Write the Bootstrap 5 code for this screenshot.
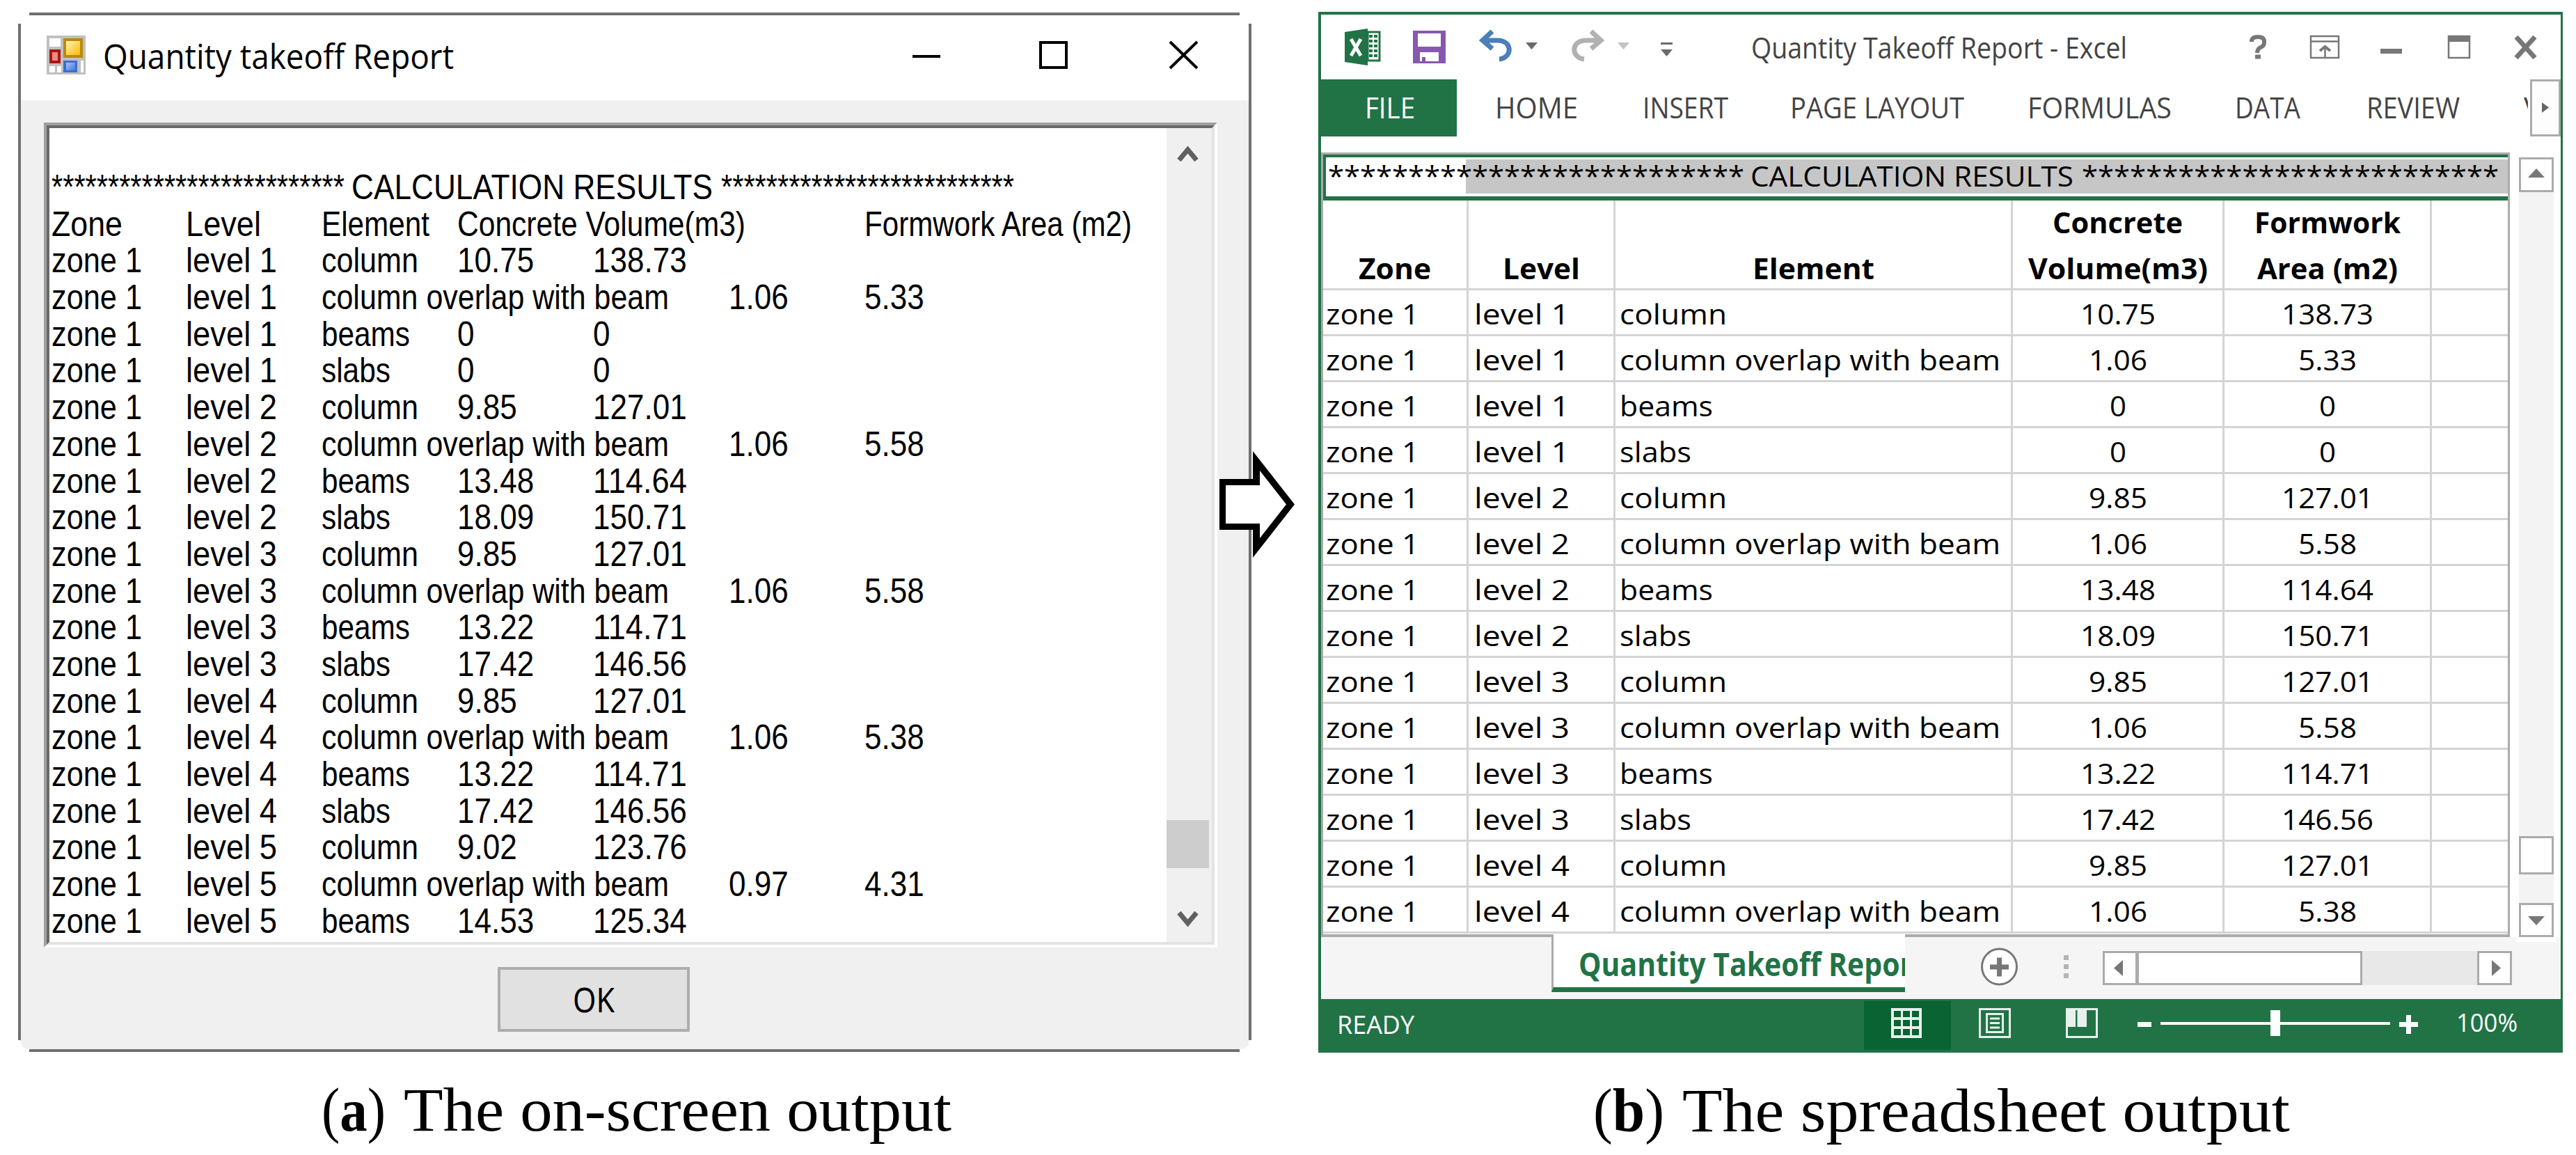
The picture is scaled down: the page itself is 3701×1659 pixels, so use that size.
<!DOCTYPE html>
<html lang="en">
<head>
<meta charset="utf-8">
<title>Quantity takeoff report</title>
<link rel="stylesheet" href="https://cdn.jsdelivr.net/npm/bootstrap@5.3.0/dist/css/bootstrap.min.css">
<style>
body{width:3701px;height:1659px;overflow:hidden;background:#fff;color:#000}
svg{display:block;flex:none}
.fit{display:inline-block;white-space:pre;transform-origin:0 50%;flex:none}
.figure-row{padding:18px 19px 0 26px;gap:96px}
.cap{font:88px/100px "Liberation Serif",serif;margin-top:34px;gap:26px}
/* dialog */
.dlg{width:1772px;height:1493px;padding:4px;
 background:linear-gradient(#707070,#707070) 16px 0/1739px 4px no-repeat,
 linear-gradient(#707070,#707070) 16px 1489px/1739px 4px no-repeat,
 linear-gradient(#707070,#707070) 0 16px/4px 1460px no-repeat,
 linear-gradient(#707070,#707070) 1768px 16px/4px 1460px no-repeat}
.dlg-title{height:122px;padding-left:37px;font:49px/116px "Open Sans",sans-serif}
.dlg-body{height:1363px;background:#f0f0f0;padding:32px 45px 0 33px;border-radius:0 0 10px 10px}
.sunken{height:1185px;border:4px solid;border-color:#a0a0a0 #fff #fff #a0a0a0}
.sunken-in{height:1177px;border:4px solid;border-color:#696969 #e3e3e3 #e3e3e3 #696969;background:#fff}
.report{padding:59px 0 0 3px;font:50px/52.7px "Liberation Sans",sans-serif;height:1169px}
.report .line{height:52.7px}
.tabstop{width:195px;flex:none;white-space:nowrap}
.tabstop:first-child{width:193px}
.vbar{width:65px;background:#f0f0f0}
.okbtn{width:276px;height:93px;border:4px solid #adadad;background:#e1e1e1;border-radius:0;margin:28px 0 0 652px;padding:0;font:50px/79px "Noto Sans",sans-serif;color:#000;display:block}
/* spreadsheet */
.xl{width:1788px;height:1495px;margin-top:-1px;border:4px solid #217346;border-right-width:3px;border-bottom:0;font-family:"Open Sans",sans-serif;background:#fff}
.xl-title{height:93px;font-size:42px;line-height:93px;color:#444}
.ribbon{height:82px;font-size:42px;line-height:80px;color:#444}
.filetab{width:195px;height:82px;padding-left:63px;background:#217346;color:#fff}
.ribbtn{border:3px solid #ababab;width:44px;height:82px;background:#fdfdfd}
.sheetwrap{margin-top:23px;height:1127px}
.sheet{width:1708px;height:1127px;border:3px solid #ababab;border-bottom-width:4px;font:40.5px/68px "Open Sans",sans-serif}
.selrow{height:66px;border:solid #217346;border-width:4px 0 6px 4px;padding:3px 0 4px;line-height:66px}
.selfill{height:49px;background:linear-gradient(#c6c6c6,#c6c6c6) 201px 0/100% 100% no-repeat;line-height:48px;padding-left:3px}
.r{height:66px;border-bottom:3px solid #d4d4d4}
.r.hd{height:129px;font-weight:700;line-height:66px;align-items:stretch}
.r>div{border-right:3px solid #d4d4d4;flex:none;padding-left:4px;white-space:nowrap}
.r>div:nth-child(1){width:209px}.r>div:nth-child(2){width:211px;padding-left:8px}
.r>div:nth-child(3){width:571px;padding-left:6px}.r>div:nth-child(4){width:304px}
.r>div:nth-child(5){width:298px}.r>div:nth-child(6){border:0}
.r>div.text-center{padding-left:0}
.hd>div{display:flex;flex-direction:column;justify-content:flex-end;align-items:center;padding:0!important}
.hd>div::after{content:"";margin-bottom:-5px}
.strip{height:93px;margin-top:-4px;position:relative;background:linear-gradient(transparent 4px,#f5f5f5 4px)}
.stab{margin-left:331px;width:508px;height:83px;background:#fff;border-left:3px solid #ababab;border-bottom:7px solid #217346;color:#217346;font-size:46px;font-weight:700;line-height:85px;padding-left:36px;overflow:hidden}
.status{height:77px;background:#217346;color:#fff;font-size:37px;line-height:71px;padding-left:23px}
.arrow{position:absolute;left:1752px;top:648px}
</style>
</head>
<body>
<main class="d-flex figure-row">
 <section>
  <div class="dlg">
   <div class="dlg-title d-flex">
    <svg width="56" height="56" viewBox="0 0 56 56" style="margin-top:29px"><defs><linearGradient id="y" x2="1" y2="1"><stop stop-color="#fff3b8"/><stop offset="1" stop-color="#fdb900"/></linearGradient><linearGradient id="b" x2="1" y2="1"><stop stop-color="#a9c8ff"/><stop offset="1" stop-color="#3f74dd"/></linearGradient></defs><path fill="#c0c0c0" d="M0 0h56v56H0z"/><path fill="#fff" d="M4 4h16v12H4zM4 44h8v9H4zM15 44h6v9h-6zM49 36h4v17h-4z"/><path fill="#b98a0e" d="M24 4h28v28H24z"/><path fill="url(#y)" d="M28 8h20v20H28z"/><path fill="#ab1710" d="M4 20h16v20H4z"/><path fill="#eb8b80" d="M8 24h8v12H8z"/><path fill="#3a6fcc" d="M24 36h20v17H24z"/><path fill="url(#b)" d="M28 39h13v11H28z"/></svg>
    <span class="fit" data-w="504" style="margin-left:25px">Quantity takeoff Report</span>
    <svg class="ms-auto" width="500" height="122" viewBox="1294 22 500 122" fill="none" stroke="#000" stroke-width="4"><path d="M1311 81h40M1495 61h37v36h-37zM1681 60l39 38M1720 60l-39 38"/></svg>
   </div>
   <div class="dlg-body">
    <div class="sunken"><div class="sunken-in d-flex">
     <div class="report flex-grow-1" id="report"></div>
     <svg class="vbar" width="65" height="1169" viewBox="1676 184 65 1169"><path fill="#cdcdcd" d="M1676 1178h61v69h-61z"/><path fill="none" stroke="#606060" stroke-width="7" d="M1694 230l12.500-15 12.500 15M1694 1311l12.500 15 12.500-15"/></svg>
    </div></div>
    <button class="okbtn btn"><span class="fit" data-w="60">OK</span></button>
   </div>
  </div>
  <div class="cap d-flex" style="padding-left:436px"><span class="fit" data-w="92">(<b>a</b>)</span><span class="fit" data-w="787">The on-screen output</span></div>
 </section>
 <section>
  <div class="xl">
   <div class="xl-title d-flex">
    <svg width="618" height="93" viewBox="1898 21 618 93">
     <path fill="#217346" d="M1932 46l33-5v53l-33-5z"/><path fill="#fff" stroke="#217346" stroke-width="3" d="M1965 46h17v41h-17z"/><path stroke="#217346" stroke-width="4" d="M1967 52h12M1967 59h12M1967 66h12M1967 73h12M1967 80h12" stroke-dasharray="5 2"/><path stroke="#fff" stroke-width="5" d="M1941 56l14 24M1955 56l-14 24"/>
     <path fill="#8858ae" d="M2030 44h47v47h-47z"/><path fill="#fff" d="M2037 48h33v19h-33zM2040 75h27v13h-19v-6h-5v6h-3z"/>
     <path fill="none" stroke="#4a7fb8" stroke-width="7" d="M2130 58h21c23 0 22 25 3 27M2144 45l-14 13 14 12"/><path fill="none" stroke="#b1b1b1" stroke-width="7" d="M2300 58h-21c-23 0-22 25-3 27M2286 45l14 13-14 12"/>
     <path fill="#6a6a6a" d="M2192 61h17l-8.500 10zM2386 61h17v3h-17zM2386 71h17l-8.500 10z"/><path fill="#c3c3c3" d="M2324 61h17l-8.500 10z"/></svg>
    <span class="fit" data-w="540">Quantity Takeoff Report - Excel</span>
    <svg class="ms-auto" width="460" height="93" viewBox="3219 21 460 93" fill="none" stroke="#777"><path stroke-width="6" d="M3235 60v-2q1-5 9-5t9 5v3q0 5-5 7t-5 8M3240 81.500h8"/><path stroke-width="2.500" d="M3320 52h40v31h-40zM3320 59.500h40M3340.500 82V66"/><path stroke-width="4" d="M3333 73l7.500-6 7.500 6"/><path stroke-width="7" d="M3420 73.500h31"/><path stroke-width="2.500" d="M3518 52h30v31h-30z"/><path stroke-width="9" d="M3517 55.500h32"/><path stroke-width="7" d="M3615 53l27 30M3642 53l-27 30"/></svg>
   </div>
   <div class="ribbon d-flex">
    <div class="filetab"><span class="fit" data-w="72">FILE</span></div>
    <span class="fit" data-w="119" style="margin-left:55px">HOME</span>
    <span class="fit" data-w="123" style="margin-left:93px">INSERT</span>
    <span class="fit" data-w="250" style="margin-left:89px">PAGE LAYOUT</span>
    <span class="fit" data-w="207" style="margin-left:91px">FORMULAS</span>
    <span class="fit" data-w="94" style="margin-left:91px">DATA</span>
    <span class="fit" data-w="134" style="margin-left:95px">REVIEW</span>
    <span class="overflow-hidden" style="width:6px;margin-left:92px">V</span>
    <div class="ribbtn ms-auto"><svg width="38" height="76" viewBox="3638 117 38 76"><path fill="#666" d="M3652 147l10 7.500-10 7.500z"/></svg></div>
   </div>
   <div class="sheetwrap d-flex">
    <div class="sheet">
     <div class="selrow"><div class="selfill d-flex"><span class="fit" data-w="598">**************************</span><span class="fit" data-w="464" style="margin-left:9px">CALCULATION RESULTS</span><span class="fit" data-w="599" style="margin-left:12px">**************************</span></div></div>
     <div class="r hd d-flex"><div><span class="fit" data-w="104">Zone</span></div><div><span class="fit" data-w="111">Level</span></div><div><span class="fit" data-w="175">Element</span></div><div><span class="fit" data-w="187">Concrete</span><span class="fit" data-w="258">Volume(m3)</span></div><div><span class="fit" data-w="210">Formwork</span><span class="fit" data-w="202">Area (m2)</span></div><div></div></div>
     <div id="rows"></div>
    </div>
    <svg width="73" height="1134" viewBox="3606 219 73 1134" style="z-index:1"><path fill="#f3f3f3" d="M3619 226h50v1120h-50z"/><path fill="#fff" d="M3616 1340h56v13h-56z"/><g fill="#fff" stroke="#ababab" stroke-width="3"><path d="M3620.500 227.500h47v47h-47zM3620.500 1202.500h47v52h-47zM3620.500 1298.500h47v46h-47z"/></g><path fill="#777" d="M3632 255l12-13 12 13zM3632 1316l12 13 12-13z"/></svg>
   </div>
   <div class="strip d-flex">
    <svg width="0" height="93" viewBox="1898 1342 1 93" overflow="visible"><path fill="#c0c0c0" d="M2001 1375v24l-14-12zM2083 1375v24l14-12z"/></svg>
    <div class="stab"><span class="fit" data-w="498">Quantity Takeoff Report</span></div>
    <svg width="942" height="93" viewBox="2737 1342 942 93"><ellipse cx="2872.500" cy="1388.500" rx="25" ry="25.500" fill="#fff" stroke="#777" stroke-width="3"/><path stroke="#777" stroke-width="7" d="M2859 1389h27M2872.500 1375.500v27"/><path fill="#b5b5b5" d="M2965 1372h7v7h-7zM2965 1385h7v7h-7zM2965 1398h7v7h-7z"/><path fill="#e8e8e8" d="M3390 1366h170v49h-170z"/><g fill="#fff" stroke="#ababab" stroke-width="3"><path d="M3022.500 1367.500h47v46h-47zM3071.500 1367.500h321v46h-321zM3560.500 1367.500h47v46h-47z"/></g><path fill="#777" d="M3050 1379v23l-13-11.500zM3580 1379v23l13-11.500z"/></svg>
   </div>
   <div class="status d-flex">
    <span class="fit" data-w="111">READY</span>
    <svg class="ms-auto" width="851" height="77" viewBox="2678 1435 851 77"><path fill="#0a6332" d="M2678 1438h125v70h-125z"/><path fill="#e8f1ec" d="M2717 1448h44v43h-44z"/><path fill="#0a6332" d="M2721 1452h10v9h-10zM2734 1452h10v9h-10zM2747 1452h10v9h-10zM2721 1465h10v9h-10zM2734 1465h10v9h-10zM2747 1465h10v9h-10zM2721 1478h10v9h-10zM2734 1478h10v9h-10zM2747 1478h10v9h-10z"/><g fill="none" stroke="#e8f1ec" stroke-width="3"><path d="M2844.500 1449.500h43v40h-43zM2854.500 1456.500h23v26h-23zM2859 1463h14M2859 1469.500h14M2859 1476h14M2969.500 1449.500h43v40h-43z"/></g><path fill="#e8f1ec" d="M2970 1450h12v25h-12zM2984.500 1450h13.500v25h-13.500z"/><path fill="#fff" d="M3071 1468h20v7h-20zM3104 1468h330v4h-330zM3262 1451h14v37h-14zM3447 1468h27v7h-27zM3457 1458h7v27h-7z"/></svg>
    <span class="fit" data-w="88" style="line-height:65px">100%</span><span style="width:62px"></span>
   </div>
  </div>
  <div class="cap d-flex" style="padding-left:395px"><span class="fit" data-w="102">(<b>b</b>)</span><span class="fit" data-w="873">The spreadsheet output</span></div>
 </section>
</main>
<svg class="arrow" width="108" height="153" viewBox="1752 648 108 153"><path d="M1752 688h48v-40l60 76.500-60 76.500v-40h-48z"/><path fill="#fff" d="M1761 697h49v-21l38 48.500-38 48.500v-21h-49z"/></svg>
<script src="https://cdn.jsdelivr.net/npm/bootstrap@5.3.0/dist/js/bootstrap.bundle.min.js"></script>
<script>
const overlap = 'column overlap with beam';
const data = [
 [1,'column','10.75','138.73'],[1,overlap,'1.06','5.33'],[1,'beams','0','0'],[1,'slabs','0','0'],
 [2,'column','9.85','127.01'],[2,overlap,'1.06','5.58'],[2,'beams','13.48','114.64'],[2,'slabs','18.09','150.71'],
 [3,'column','9.85','127.01'],[3,overlap,'1.06','5.58'],[3,'beams','13.22','114.71'],[3,'slabs','17.42','146.56'],
 [4,'column','9.85','127.01'],[4,overlap,'1.06','5.38'],[4,'beams','13.22','114.71'],[4,'slabs','17.42','146.56'],
 [5,'column','9.02','123.76'],[5,overlap,'0.97','4.31'],[5,'beams','14.53','125.34']];
// widths of the words in the dialog and in the sheet
const dlgW = {column:139, beams:127, slabs:99, [overlap]:499}, xlW = {column:154, beams:134, slabs:103, [overlap]:547};
const numW = (s, d) => s.length === 1 ? d : (s.length - 1) * d + d / 2;
const fit = (t, w) => `<span class="fit" data-w="${w}">${t}</span>`;
const tab = (t, w, n = 1) => `<div class="tabstop"${n > 1 ? ` style="width:${n * 195}px"` : ''}>${fit(t, w)}</div>`;
const stars = '*'.repeat(26);
document.getElementById('report').innerHTML =
 `<div class="line d-flex">${fit(stars, 421)}<span style="width:10px"></span>${fit('CALCULATION RESULTS', 519)}<span style="width:12px"></span>${fit(stars, 421)}</div>` +
 `<div class="line d-flex">${tab('Zone', 102)}${tab('Level', 108)}${tab('Element', 155)}${tab('Concrete Volume(m3)', 414, 3)}${tab('Formwork Area (m2)', 384)}</div>` +
 data.map(([l, e, a, b]) => `<div class="line d-flex">${tab('zone 1', 130)}${tab('level ' + l, 131)}${tab(e, dlgW[e], e === overlap ? 3 : 1)}${tab(a, numW(a, 24.5))}${tab(b, numW(b, 24.5))}</div>`).join('');
document.getElementById('rows').innerHTML = data.slice(0, 14).map(([l, e, a, b]) =>
 `<div class="r d-flex"><div>${fit('zone 1', 134)}</div><div>${fit('level ' + l, 137)}</div><div>${fit(e, xlW[e])}</div><div class="text-center">${fit(a, numW(a, 24))}</div><div class="text-center">${fit(b, numW(b, 24))}</div><div></div></div>`).join('');
document.querySelectorAll('.fit').forEach(el => {
 const w = el.getBoundingClientRect().width, t = +el.dataset.w;
 el.style.marginRight = (t - w) + 'px';
 el.style.transform = `scaleX(${t / w})`;
});
</script>
</body>
</html>
